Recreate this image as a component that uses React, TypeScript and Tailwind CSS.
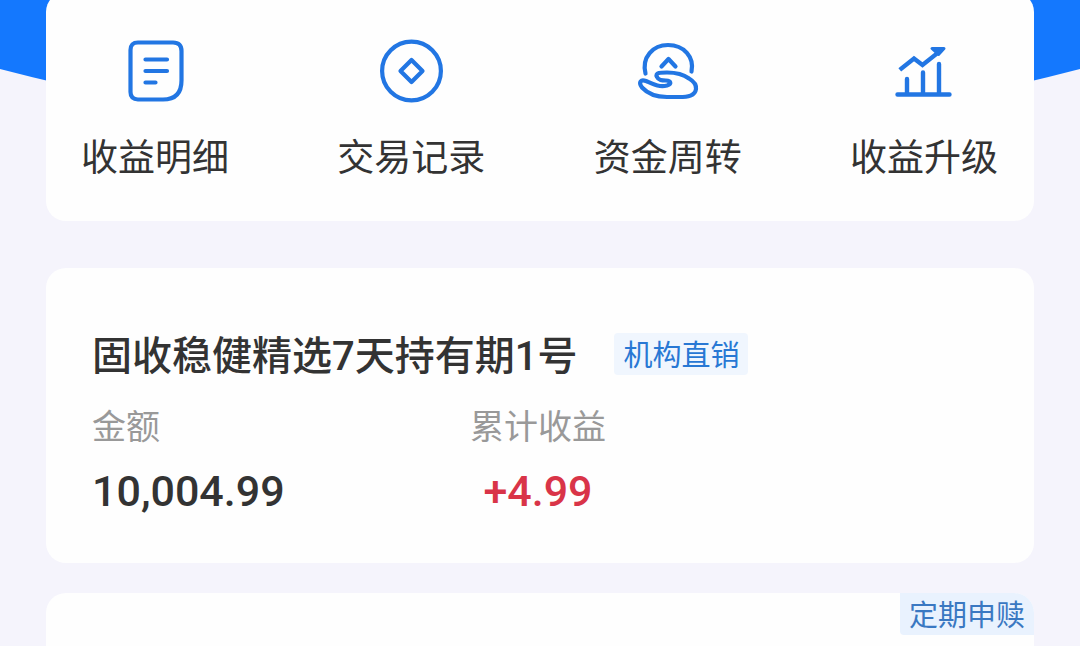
import type { ReactNode } from "react";

const BLUE = "#2276e3";

function StatementIcon() {
  return (
    <svg viewBox="0 0 64 64" className="size-16" fill="none" stroke={BLUE} strokeWidth="4.200" strokeLinecap="round" aria-hidden="true">
      <path d="M15 3.500H50Q58.500 3.500 58.500 12V41.500Q58.500 60.500 40 60.500H15Q7.500 60.500 7.500 53V11Q7.500 3.500 15 3.500Z" />
      <path d="M22.500 20.500H44M22.500 32H44M22.500 43.500H32.500" />
    </svg>
  );
}

function RecordIcon() {
  return (
    <svg viewBox="0 0 64 64" className="size-16" fill="none" stroke={BLUE} strokeWidth="4.200" strokeLinejoin="round" aria-hidden="true">
      <circle cx="32.500" cy="32" r="29.400" />
      <path d="M32.500 21L43.500 32L32.500 43L21.500 32Z" />
    </svg>
  );
}

function TurnoverIcon() {
  return (
    <svg viewBox="0 0 64 64" className="size-16" fill="none" stroke={BLUE} strokeWidth="4.200" strokeLinecap="round" strokeLinejoin="round" aria-hidden="true">
      <path d="M9.500 34.500C5.500 18 17 6 32 6C48 6 58.500 18 55.500 32.500" />
      <path d="M25.500 27.500L32.500 20L39.500 27.500" />
      <path d="M21 38C18.500 33.500 25 33.500 31 33.500C41 33.500 47 35 53 39.500C59 43 60.500 46 60 50C59 57 52 58 43 58H31C20 58 12 55 6 48.500C2 43 5 40 10 42C17 45 23 48.500 31 46.500C36 45 35 41.500 30 41.500C26 41.500 22.500 41.500 21 38Z" />
    </svg>
  );
}

function UpgradeIcon() {
  return (
    <svg viewBox="0 0 64 64" className="size-16" fill="none" stroke={BLUE} strokeWidth="4.400" strokeLinecap="round" aria-hidden="true">
      <path d="M5.500 55.500H57.500M15 40V55M31 33.500V55M47 25V55" />
      <path d="M9.500 29.500L22 19.500L30.500 26L47.500 12.500" strokeLinecap="square" />
      <path d="M40 9.500H52L46.500 15.500Z" fill={BLUE} strokeWidth="3" strokeLinejoin="round" />
    </svg>
  );
}

const shortcuts: { label: string; icon: ReactNode }[] = [
  { label: "收益明细", icon: <StatementIcon /> },
  { label: "交易记录", icon: <RecordIcon /> },
  { label: "资金周转", icon: <TurnoverIcon /> },
  { label: "收益升级", icon: <UpgradeIcon /> },
];

export default function App() {
  return (
    <div className="relative flex h-screen flex-col overflow-hidden bg-[#f5f4fc] px-[46px] font-['Noto_Sans_CJK_SC',sans-serif] text-[#333333]">
      <svg className="absolute inset-x-0 top-0 h-[150px] w-full" viewBox="0 0 1080 150" preserveAspectRatio="none" aria-hidden="true">
        <path d="M0 0H1080V69Q540 210 0 69Z" fill="#1478fe" />
      </svg>

      <nav className="relative -mt-2 flex shrink-0 justify-between rounded-[20px] bg-[#fefefe] pt-[47px] pr-9 pb-[38px] pl-[35px]">
        {shortcuts.map(({ label, icon }) => (
          <button key={label} type="button" className="flex flex-col items-center gap-6">
            {icon}
            <span className="text-[37px] leading-[56px]">{label}</span>
          </button>
        ))}
      </nav>

      <main className="mt-[47px] flex flex-col gap-[30px]">
        <section className="rounded-[20px] bg-[#fefefe] px-[46px] pt-[58px] pb-[43px]">
          <div className="flex items-center gap-[37px]">
            <h2 className="pt-1.5 font-[Roboto,'Noto_Sans_CJK_SC',sans-serif] text-[40px] leading-[50px] font-medium">固收稳健精选7天持有期1号</h2>
            <span className="rounded bg-[#f0f6fe] px-[9px] pb-0.5 text-[29px] leading-[40px] text-[#2878d4]">机构直销</span>
          </div>
          <dl className="mt-5 flex">
            <div className="w-[378px]">
              <dt className="text-[34px] leading-[46px] text-[#999999]">金额</dt>
              <dd className="mt-3.5 font-[Roboto,sans-serif] text-[43px] leading-[58px] font-medium">10,004.99</dd>
            </div>
            <div className="flex flex-col items-center">
              <dt className="text-[34px] leading-[46px] text-[#999999]">累计收益</dt>
              <dd className="mt-3.5 font-[Roboto,sans-serif] text-[43px] leading-[58px] font-medium text-[#d93448]">+4.99</dd>
            </div>
          </dl>
        </section>

        <section className="flex h-40 items-start justify-end rounded-[20px] bg-[#fefefe]">
          <span className="rounded-tr-[20px] rounded-bl bg-[#e9f2fe] px-[9px] pb-0.5 text-[29px] leading-[40px] text-[#3a78c2]">定期申赎</span>
        </section>
      </main>
    </div>
  );
}
